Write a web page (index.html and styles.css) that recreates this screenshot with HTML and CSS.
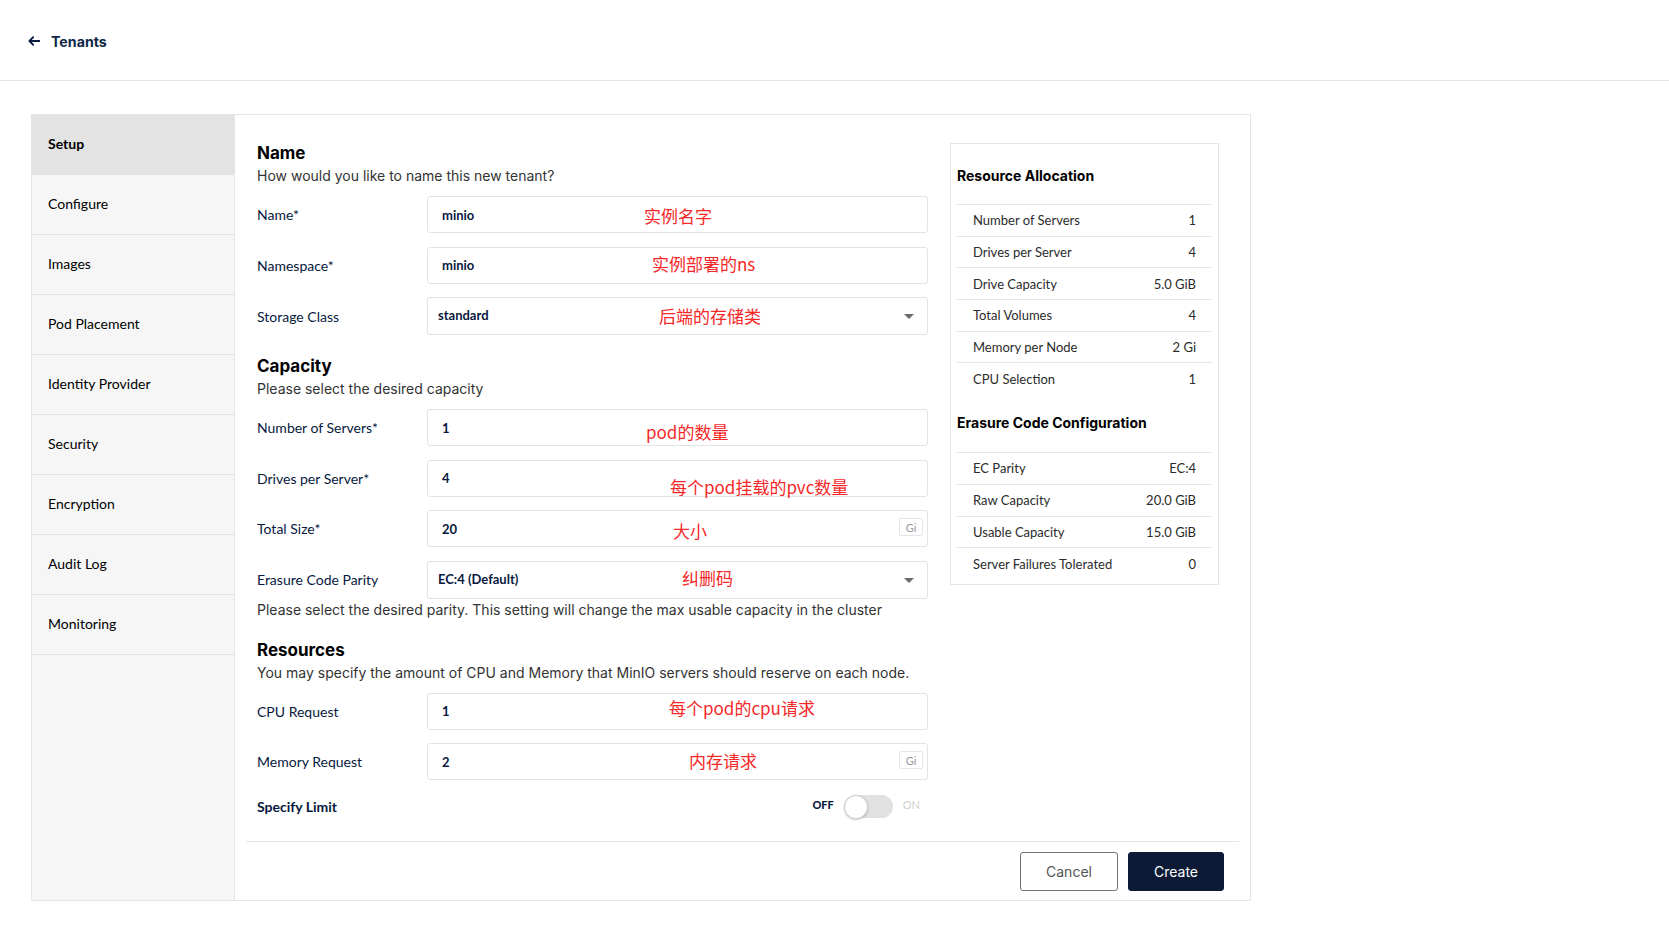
FILE: index.html
```html
<!DOCTYPE html>
<html lang="en">
<head>
<meta charset="utf-8">
<title>Create Tenant</title>
<link rel="stylesheet" href="styles.css">
</head>
<body>
<header class="topbar">
  <svg class="back-arrow" width="12" height="10" viewBox="0 0 12 10"><path d="M11.5 5H1.6M5.2 1.2L1.4 5l3.8 3.8" stroke="#07193e" stroke-width="1.8" fill="none" stroke-linecap="round" stroke-linejoin="round"/></svg>
  <span class="topbar-title">Tenants</span>
</header>
<main class="page">
  <div class="wizard">
    <nav class="steps">
      <div class="step active">Setup</div>
      <div class="step">Configure</div>
      <div class="step">Images</div>
      <div class="step">Pod Placement</div>
      <div class="step">Identity Provider</div>
      <div class="step">Security</div>
      <div class="step">Encryption</div>
      <div class="step">Audit Log</div>
      <div class="step">Monitoring</div>
    </nav>
    <section class="content">
      <div class="content-body">
        <div class="form">
          <h3 class="section-title">Name</h3>
          <p class="section-desc">How would you like to name this new tenant?</p>
          <div class="field">
            <label class="field-label">Name*</label>
            <div class="input">minio<span class="note n1">实例名字</span></div>
          </div>
          <div class="field">
            <label class="field-label">Namespace*</label>
            <div class="input">minio<span class="note n2">实例部署的ns</span></div>
          </div>
          <div class="field field-last">
            <label class="field-label">Storage Class</label>
            <div class="input select">standard<span class="note n3">后端的存储类</span><span class="caret"></span></div>
          </div>

          <h3 class="section-title">Capacity</h3>
          <p class="section-desc">Please select the desired capacity</p>
          <div class="field">
            <label class="field-label">Number of Servers*</label>
            <div class="input">1<span class="note n4">pod的数量</span></div>
          </div>
          <div class="field">
            <label class="field-label">Drives per Server*</label>
            <div class="input">4<span class="note n5">每个pod挂载的pvc数量</span></div>
          </div>
          <div class="field">
            <label class="field-label">Total Size*</label>
            <div class="input">20<span class="note n6">大小</span><span class="unit">Gi</span></div>
          </div>
          <div class="field field-help">
            <label class="field-label">Erasure Code Parity</label>
            <div class="input select">EC:4 (Default)<span class="note n7">纠删码</span><span class="caret"></span></div>
          </div>
          <p class="help">Please select the desired parity. This setting will change the max usable capacity in the cluster</p>

          <h3 class="section-title sec-resources">Resources</h3>
          <p class="section-desc">You may specify the amount of CPU and Memory that MinIO servers should reserve on each node.</p>
          <div class="field">
            <label class="field-label">CPU Request</label>
            <div class="input">1<span class="note n8">每个pod的cpu请求</span></div>
          </div>
          <div class="field">
            <label class="field-label">Memory Request</label>
            <div class="input">2<span class="note n9">内存请求</span><span class="unit">Gi</span></div>
          </div>
          <div class="limit-row">
            <span class="limit-label">Specify Limit</span>
            <div class="switch">
              <span class="switch-off">OFF</span>
              <span class="track"><span class="thumb"></span></span>
              <span class="switch-on">ON</span>
            </div>
          </div>
        </div>

        <aside class="summary">
          <h4 class="summary-title">Resource Allocation</h4>
          <div class="summary-table">
            <div class="srow"><span>Number of Servers</span><span>1</span></div>
            <div class="srow"><span>Drives per Server</span><span>4</span></div>
            <div class="srow"><span>Drive Capacity</span><span>5.0 GiB</span></div>
            <div class="srow"><span>Total Volumes</span><span>4</span></div>
            <div class="srow"><span>Memory per Node</span><span>2 Gi</span></div>
            <div class="srow"><span>CPU Selection</span><span>1</span></div>
          </div>
          <h4 class="summary-title second">Erasure Code Configuration</h4>
          <div class="summary-table">
            <div class="srow"><span>EC Parity</span><span>EC:4</span></div>
            <div class="srow"><span>Raw Capacity</span><span>20.0 GiB</span></div>
            <div class="srow"><span>Usable Capacity</span><span>15.0 GiB</span></div>
            <div class="srow"><span>Server Failures Tolerated</span><span>0</span></div>
          </div>
        </aside>
      </div>
      <div class="footer">
        <button class="btn btn-cancel">Cancel</button>
        <button class="btn btn-create">Create</button>
      </div>
    </section>
  </div>
</main>
</body>
</html>
```
FILE: styles.css
```css
* { box-sizing: border-box; }

body {
  margin: 0;
  background: #fff;
  font-family: Lato, "Noto Sans", sans-serif;
  color: #07193e;
}

.topbar {
  height: 81px;
  border-bottom: 1px solid #e5e5e5;
  display: flex;
  align-items: center;
  padding-left: 28px;
  padding-top: 2px;
  gap: 11px;
}

.back-arrow { display: block; }

.topbar-title {
  font-family: Inter, sans-serif;
  font-weight: 700;
  font-size: 14.2px;
  color: #102848;
}

.page { padding: 33px 0 0 31px; }

.wizard {
  width: 1220px;
  height: 787px;
  border: 1px solid #e5e5e5;
  display: flex;
}

.steps {
  width: 203px;
  flex: none;
  background: #f6f6f6;
  border-right: 1px solid #e5e5e5;
  display: flex;
  flex-direction: column;
}

.step {
  height: 60px;
  flex: none;
  border-bottom: 1px solid #e2e2e2;
  display: flex;
  align-items: center;
  padding: 0 0 2px 16px;
  font-size: 14px;
  color: #000;
}

.step.active {
  background: #e3e3e3;
  font-weight: 700;
}

.content {
  flex: 1;
  display: flex;
  flex-direction: column;
  min-width: 0;
}

.content-body {
  flex: 1;
  display: flex;
  align-items: flex-start;
  gap: 22px;
  padding: 28px 31px 0 22px;
}

.form { width: 671px; flex: none; }

.section-title {
  margin: 0;
  font-family: Inter, sans-serif;
  font-weight: 700;
  font-size: 17px;
  line-height: 20px;
  color: #000;
}

.section-desc {
  margin: 3px 0 10px;
  font-family: Inter, sans-serif;
  font-size: 14px;
  line-height: 20px;
  color: #333;
}

.field {
  display: flex;
  align-items: center;
  margin-bottom: 13.5px;
}

.field-last { margin-bottom: 21px; }
.field-help { margin-bottom: 1px; }

.field-label {
  width: 170px;
  flex: none;
  font-size: 14px;
  color: #07193e;
}

.input {
  flex: 1;
  position: relative;
  height: 37px;
  border: 1px solid #e3e3e3;
  border-radius: 3px;
  display: flex;
  align-items: center;
  padding-left: 14px;
  font-size: 13px;
  font-weight: 700;
  color: #07193e;
}

.input.select {
  height: 38px;
  padding-left: 10px;
  padding-bottom: 2px;
}

.caret {
  position: absolute;
  right: 13px;
  top: 16px;
  width: 0;
  height: 0;
  border-left: 5px solid transparent;
  border-right: 5px solid transparent;
  border-top: 5px solid #6b6b6b;
}

.unit {
  position: absolute;
  right: 4px;
  top: 7px;
  width: 24px;
  height: 18px;
  border: 1px solid #e6e6e6;
  border-radius: 2px;
  display: flex;
  align-items: center;
  justify-content: center;
  font-size: 11px;
  font-weight: 400;
  color: #9a9a9a;
}

.note {
  position: absolute;
  font-family: "Noto Sans CJK SC", "Noto Sans", sans-serif;
  font-size: 17px;
  line-height: 17px;
  font-weight: 400;
  color: #f52828;
  white-space: nowrap;
}

.n1 { left: 216px; top: 9.5px; }
.n2 { left: 224px; top: 7.5px; }
.n3 { left: 231px; top: 8.5px; }
.n4 { left: 218px; top: 12.5px; }
.n5 { left: 242px; top: 17.5px; }
.n6 { left: 245px; top: 10.5px; }
.n7 { left: 254px; top: 7.5px; }
.n8 { left: 241px; top: 5.5px; }
.n9 { left: 261px; top: 7.5px; }

.help {
  margin: 0;
  font-family: Inter, sans-serif;
  font-size: 14px;
  line-height: 20px;
  color: #333;
}

.sec-resources { margin-top: 20px; }

.limit-row {
  margin-top: 0;
  height: 26px;
  display: flex;
  align-items: center;
  justify-content: space-between;
  padding-right: 8px;
}

.limit-label {
  font-size: 14px;
  font-weight: 700;
  color: #07193e;
}

.switch {
  display: flex;
  align-items: center;
}

.switch-off {
  font-size: 11px;
  font-weight: 900;
  color: #07193e;
  margin-right: 10px;
  margin-top: -4px;
}

.switch-on {
  font-size: 11px;
  color: #cfcfcf;
  margin-left: 10px;
  margin-top: -4px;
}

.track {
  position: relative;
  width: 49px;
  height: 23px;
  border-radius: 12px;
  background: #e1e1e1;
}

.thumb {
  position: absolute;
  left: 0;
  top: -0.5px;
  width: 24px;
  height: 24px;
  border-radius: 50%;
  background: #fff;
  border: 1px solid #cfcfcf;
  box-shadow: 0 1px 2px rgba(0, 0, 0, 0.2);
}

.summary {
  width: 269px;
  flex: none;
  border: 1px solid #e5e5e5;
  padding: 22px 6px 5px;
}

.summary-title {
  margin: 0 0 18px;
  font-family: Inter, sans-serif;
  font-weight: 700;
  font-size: 14px;
  line-height: 20px;
  color: #000;
}

.summary-title.second { margin: 19px 0 19px; }

.srow {
  height: 31.7px;
  border-top: 1px solid #e5e5e5;
  display: flex;
  align-items: center;
  justify-content: space-between;
  padding: 0 16px;
  font-size: 13px;
  color: #2b2b2b;
}

.footer {
  margin: 0 11px;
  border-top: 1px solid #e5e5e5;
  display: flex;
  justify-content: flex-end;
  gap: 10px;
  padding: 10px 15px 9px 0;
}

.btn {
  height: 39px;
  border-radius: 3px;
  font-family: Inter, sans-serif;
  font-size: 14px;
  cursor: pointer;
}

.btn-cancel {
  width: 98px;
  background: #fff;
  border: 1px solid #747474;
  color: #555;
}

.btn-create {
  width: 96px;
  background: #0c1a36;
  border: 1px solid #0c1a36;
  color: #fff;
}
```
